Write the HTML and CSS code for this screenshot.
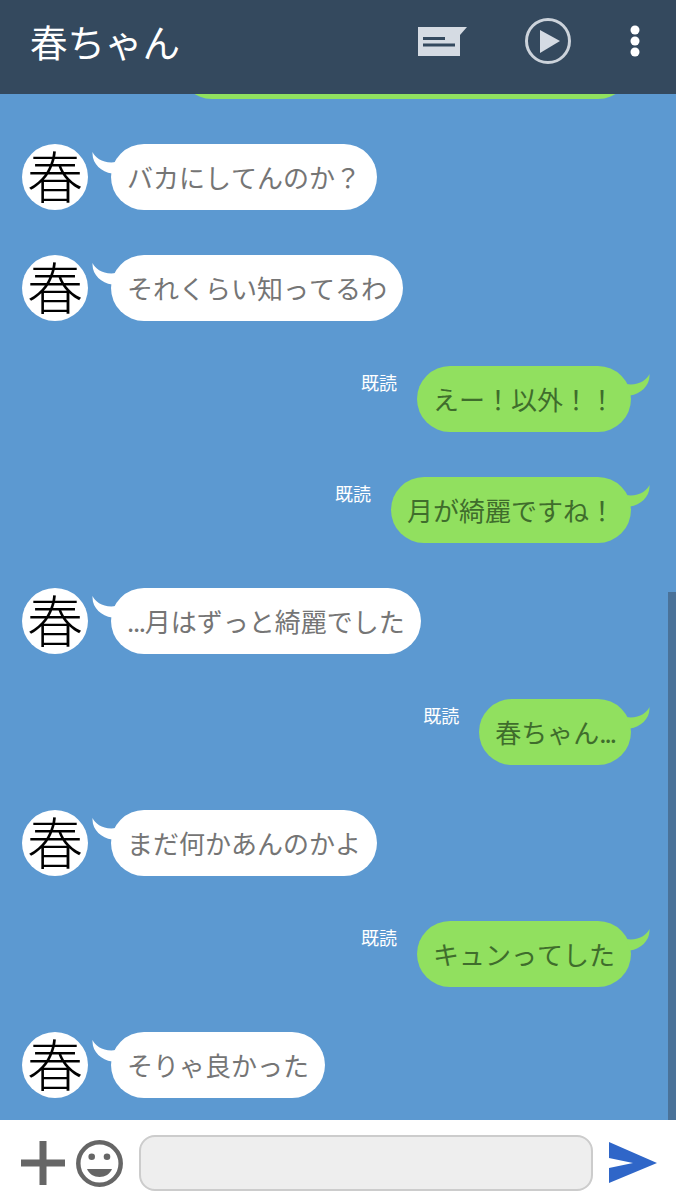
FILE: index.html
```html
<!DOCTYPE html>
<html lang="ja">
<head>
    <meta charset="UTF-8">
    <meta name="viewport" content="width=device-width, initial-scale=1.0">
    <title>春ちゃん</title>
    <link rel="stylesheet" href="styles.css">
</head>
<body>
    <!-- shared bubble tail -->
    <svg class="defs" aria-hidden="true">
        <symbol id="tail" viewBox="0 0 24 22">
            <path d="M0.6 0C3 6 12 12 24 10L20 21.5C9 20 -0.5 11 0.6 0Z"/>
        </symbol>
    </svg>

    <div class="app">
        <header class="topbar">
            <h1 class="title">春ちゃん</h1>
            <div class="actions">
                <svg class="icon-note" viewBox="0 0 49 29">
                    <path class="note-body" d="M0 0H49L42 8V29H0Z"/>
                    <rect class="note-line" x="5" y="10" width="22" height="3"/>
                    <rect class="note-line" x="5" y="16.500" width="32" height="3"/>
                </svg>
                <svg class="icon-play" viewBox="0 0 46 46">
                    <circle class="play-ring" cx="23" cy="23" r="21.500"/>
                    <path class="play-arrow" d="M15 12L35 23L15 35Z"/>
                </svg>
                <svg class="icon-more" viewBox="0 0 10 32">
                    <circle cx="5" cy="5" r="4.500"/>
                    <circle cx="5" cy="16" r="4.500"/>
                    <circle cx="5" cy="27" r="4.500"/>
                </svg>
            </div>
        </header>

        <main class="chat">
            <div class="row row-me row-cut">
                <div class="bubble bubble-me bubble-cut"></div>
            </div>

            <div class="row">
                <div class="avatar">春</div>
                <div class="bubble">バカにしてんのか？<svg class="tail"><use href="#tail"/></svg></div>
            </div>
            <div class="row">
                <div class="avatar">春</div>
                <div class="bubble">それくらい知ってるわ<svg class="tail"><use href="#tail"/></svg></div>
            </div>
            <div class="row row-me">
                <span class="read">既読</span>
                <div class="bubble bubble-me">えー！以外！！<svg class="tail"><use href="#tail"/></svg></div>
            </div>
            <div class="row row-me">
                <span class="read">既読</span>
                <div class="bubble bubble-me">月が綺麗ですね！<svg class="tail"><use href="#tail"/></svg></div>
            </div>
            <div class="row">
                <div class="avatar">春</div>
                <div class="bubble"><span class="dots">...</span>月はずっと綺麗でした<svg class="tail"><use href="#tail"/></svg></div>
            </div>
            <div class="row row-me">
                <span class="read">既読</span>
                <div class="bubble bubble-me">春ちゃん<span class="dots">...</span><svg class="tail"><use href="#tail"/></svg></div>
            </div>
            <div class="row">
                <div class="avatar">春</div>
                <div class="bubble">まだ何かあんのかよ<svg class="tail"><use href="#tail"/></svg></div>
            </div>
            <div class="row row-me">
                <span class="read">既読</span>
                <div class="bubble bubble-me">キュンってした<svg class="tail"><use href="#tail"/></svg></div>
            </div>
            <div class="row">
                <div class="avatar">春</div>
                <div class="bubble">そりゃ良かった<svg class="tail"><use href="#tail"/></svg></div>
            </div>

            <div class="scrollbar"></div>
        </main>

        <footer class="composer">
            <svg class="icon-plus" viewBox="0 0 44 44">
                <rect x="18.500" y="0" width="7" height="44"/>
                <rect x="0" y="18.500" width="44" height="7"/>
            </svg>
            <svg class="icon-smile" viewBox="0 0 47 47">
                <circle class="smile-face" cx="23.500" cy="23.500" r="21.200"/>
                <circle class="smile-fill" cx="15.700" cy="16.700" r="3.300"/>
                <circle class="smile-fill" cx="31" cy="16.700" r="3.300"/>
                <path class="smile-fill" d="M11 29H36C34 34 29 37 23.500 37C18 37 13 34 11 29Z"/>
            </svg>
            <input class="message" type="text">
            <svg class="icon-send" viewBox="0 0 49 42">
                <path d="M0 0L48 21L0 41V26L24 21L0 16Z"/>
            </svg>
        </footer>
    </div>
</body>
</html>
```

FILE: styles.css
```css
body {
    margin: 0;
    font-family: "Noto Sans CJK JP", "Liberation Sans", sans-serif;
    font-kerning: none;
    text-spacing-trim: space-all;
}

.defs {
    display: none;
}

.app {
    display: flex;
    flex-direction: column;
    height: 1200px;
    overflow: hidden;
}

/* top bar */
.topbar {
    position: relative;
    z-index: 1;
    display: flex;
    align-items: center;
    justify-content: space-between;
    flex: none;
    height: 94px;
    padding: 0 36px 12px 30px;
    box-sizing: border-box;
    background-color: #34495e;
}

.title {
    margin: 0;
    font-size: 37.500px;
    font-weight: 400;
    line-height: 50px;
    color: #fff;
}

.actions {
    display: flex;
    align-items: center;
    gap: 58px;
}

.icon-note {
    width: 49px;
    height: 29px;
}

.note-body {
    fill: #d5dbe3;
}

.note-line {
    fill: #34495e;
}

.icon-play {
    width: 46px;
    height: 46px;
}

.play-ring {
    fill: none;
    stroke: #ccd3db;
    stroke-width: 3;
}

.play-arrow {
    fill: #d5dbe3;
}

.icon-more {
    width: 10px;
    height: 32px;
    margin-left: 1px;
    fill: #fff;
}

/* messages */
.chat {
    position: relative;
    flex: 1;
    overflow: hidden;
    background-color: #5c99d1;
}

.row {
    display: flex;
    align-items: flex-start;
    height: 66px;
    margin-bottom: 45px;
    padding: 0 45px 0 22px;
}

.row-me {
    justify-content: flex-end;
}

.row-cut {
    margin-top: -61px;
}

.avatar {
    flex: none;
    width: 66px;
    height: 66px;
    margin-right: 23px;
    border-radius: 50%;
    background-color: #fff;
    font-size: 56px;
    font-weight: 300;
    line-height: 60px;
    text-align: center;
    color: #000;
}

.bubble {
    position: relative;
    height: 66px;
    padding: 0 16px;
    border-radius: 33px;
    background-color: #fff;
    font-size: 26px;
    line-height: 66px;
    white-space: nowrap;
    color: #757575;
}

.bubble-me {
    background-color: #91e05f;
    color: #3f6d2c;
}

.bubble-cut {
    width: 420px;
}

.dots {
    letter-spacing: -1.300px;
}

.bubble-me .dots {
    letter-spacing: -2px;
}

.tail {
    position: absolute;
    top: 8px;
    left: -19px;
    width: 24px;
    height: 22px;
    fill: #fff;
}

.bubble-me .tail {
    left: auto;
    right: -19px;
    transform: scaleX(-1);
    fill: #91e05f;
}

.read {
    margin: 6px 20px 0 0;
    font-size: 18px;
    line-height: 20px;
    color: #fff;
}

.scrollbar {
    position: absolute;
    top: 498px;
    right: 0;
    bottom: 0;
    width: 8px;
    background-color: #4a7299;
}

/* input bar */
.composer {
    display: flex;
    align-items: center;
    flex: none;
    height: 80px;
    padding: 6px 18px 0 21px;
    box-sizing: border-box;
    background-color: #fff;
}

.icon-plus {
    flex: none;
    width: 44px;
    height: 44px;
    margin-right: 11px;
    fill: #666;
}

.icon-smile {
    flex: none;
    width: 47px;
    height: 47px;
    margin-right: 16px;
}

.smile-face {
    fill: none;
    stroke: #666;
    stroke-width: 4.500;
}

.smile-fill {
    fill: #666;
}

.message {
    flex: none;
    width: 454px;
    height: 56px;
    margin: 0 16px 0 0;
    padding: 0;
    box-sizing: border-box;
    border: 2px solid #ccc;
    border-radius: 16px;
    background-color: #eee;
    outline: none;
}

.icon-send {
    flex: none;
    width: 49px;
    height: 42px;
    fill: #2f66c8;
}
```
